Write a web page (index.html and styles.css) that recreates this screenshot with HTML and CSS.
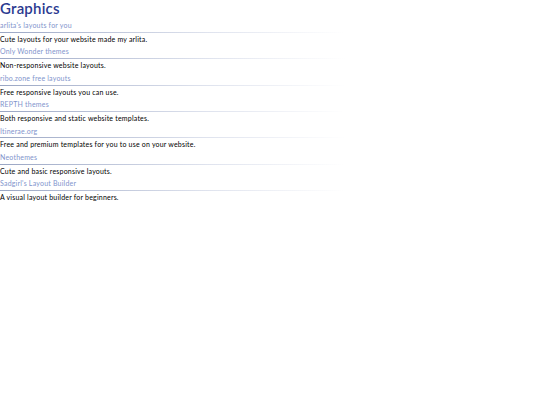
FILE: index.html
```html
<!DOCTYPE html>
<html lang="en">
<head>
  <meta charset="UTF-8">
  <title>Graphics</title>
  <link rel="stylesheet" href="styles.css">
</head>
<body>
  <h2>Graphics</h2>

  <div class="entry">
    <a class="site" href="#">arlita's layouts for you</a>
    <p class="desc">Cute layouts for your website made my arlita.</p>
  </div>
  <div class="entry">
    <a class="site" href="#">Only Wonder themes</a>
    <p class="desc">Non-responsive website layouts.</p>
  </div>
  <div class="entry">
    <a class="site" href="#">ribo.zone free layouts</a>
    <p class="desc">Free responsive layouts you can use.</p>
  </div>
  <div class="entry">
    <a class="site" href="#">REPTH themes</a>
    <p class="desc">Both responsive and static website templates.</p>
  </div>
  <div class="entry">
    <a class="site" href="#">Itinerae.org</a>
    <p class="desc">Free and premium templates for you to use on your website.</p>
  </div>
  <div class="entry">
    <a class="site" href="#">Neothemes</a>
    <p class="desc">Cute and basic responsive layouts.</p>
  </div>
  <div class="entry">
    <a class="site" href="#">Sadgirl's Layout Builder</a>
    <p class="desc">A visual layout builder for beginners.</p>
  </div>
</body>
</html>
```

FILE: styles.css
```css
body {
  margin: 0;
  background-color: #fff;
  font-family: "Lato", "Noto Sans", sans-serif;
  font-size: 7px;
  color: #000;
}

h2 {
  margin: 0 0 2px;
  font-size: 15px;
  line-height: 17px;
  font-weight: 600;
  color: #2b3990;
  letter-spacing: 0.2px;
}

.entry {
  width: 345px;
}

.site {
  display: block;
  line-height: 12.7px;
  color: #8194cc;
  text-decoration: none;
  letter-spacing: 0.2px;
}

.site::after {
  content: "";
  display: block;
  height: 1px;
  background: linear-gradient(to right, #9aa6c4, #dfe3ee 60%, rgba(255, 255, 255, 0));
}

.desc {
  margin: 0;
  line-height: 12.7px;
  letter-spacing: 0.2px;
}
```
